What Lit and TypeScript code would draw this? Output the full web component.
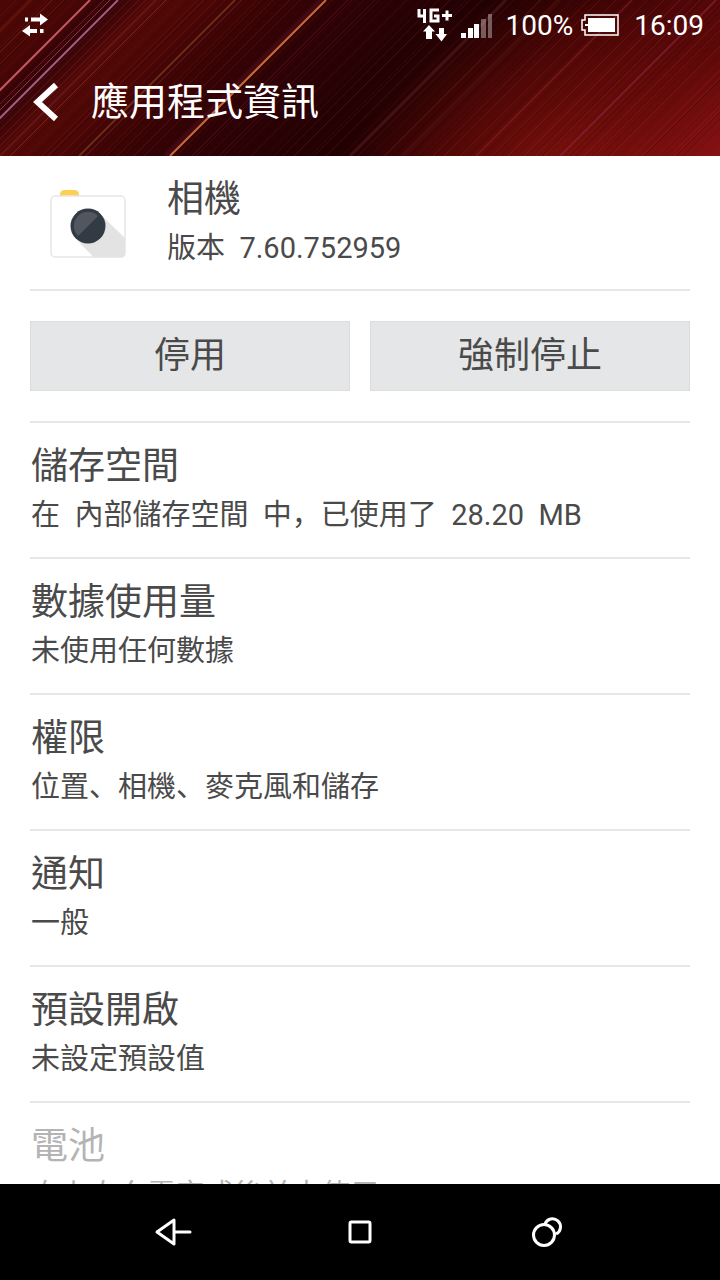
import { LitElement, html, svg, css } from "lit";
import { customElement, property } from "lit/decorators.js";

const FONT = css`Roboto, "Noto Sans CJK TC", sans-serif`;

/* Each streak: [x where it meets the top edge, width, colour, opacity] */
const STREAKS: [number, number, string, number][] = [
  [30, 2, "#7a1a14", 0.5], [52, 1, "#9a3030", 0.5], [90, 2, "#d0606c", 0.9],
  [104, 1, "#8a2a38", 0.6], [110, 1, "#a04a56", 0.8], [118, 2, "#b0648c", 0.9],
  [130, 1, "#7a2030", 0.5], [146, 1, "#8a2430", 0.5], [156, 2, "#702028", 0.6],
  [166, 1, "#8a2c34", 0.6], [204, 1, "#802028", 0.5], [216, 1, "#7a1c24", 0.5],
  [235, 2, "#7a3c22", 0.7], [242, 1, "#5a2018", 0.6], [262, 1, "#5a1418", 0.5],
  [290, 1, "#64181c", 0.5], [322, 6, "#501020", 0.5], [326, 2, "#d07038", 0.95],
  [352, 1, "#54141a", 0.5], [380, 1, "#4c1016", 0.5], [430, 1, "#481016", 0.5],
  [470, 1, "#4a1418", 0.5], [506, 3, "#5a2224", 0.5], [540, 1, "#5a2020", 0.5],
  [560, 4, "#4a1618", 0.35], [600, 1, "#6a181c", 0.5], [632, 2, "#84202c", 0.5],
  [680, 2, "#8a2028", 0.3], [700, 1, "#8a2430", 0.5], [716, 2, "#8c2840", 0.6],
  [740, 1, "#98282c", 0.4], [790, 2, "#a02424", 0.3], [830, 1, "#a82828", 0.3],
];

const GRAIN = Array.from({ length: 170 }, (_, i) => ({
  x: i * 5 + ((i * 37) % 5),
  light: (i * 53) % 3 === 0,
  alpha: 0.06 + ((i * 29) % 7) * 0.025,
}));

@customElement("wallpaper-art")
class WallpaperArt extends LitElement {
  static styles = css`
    :host { display: block; }
    svg { display: block; width: 100%; height: 100%; }
  `;
  render() {
    return html`<svg viewBox="0 0 720 156" preserveAspectRatio="none" aria-hidden="true">
      <defs>
        <linearGradient id="base" gradientUnits="userSpaceOnUse" x1="0" y1="0" x2="438" y2="438">
          <stop offset="0" stop-color="#4c0805"></stop>
          <stop offset="0.09" stop-color="#480706"></stop>
          <stop offset="0.13" stop-color="#340408"></stop>
          <stop offset="0.18" stop-color="#540a06"></stop>
          <stop offset="0.25" stop-color="#480605"></stop>
          <stop offset="0.33" stop-color="#360305"></stop>
          <stop offset="0.42" stop-color="#2c0206"></stop>
          <stop offset="0.56" stop-color="#220103"></stop>
          <stop offset="0.63" stop-color="#300203"></stop>
          <stop offset="0.72" stop-color="#460505"></stop>
          <stop offset="0.82" stop-color="#540707"></stop>
          <stop offset="0.9" stop-color="#640a0a"></stop>
          <stop offset="1" stop-color="#841014"></stop>
        </linearGradient>
        <radialGradient id="glow" gradientUnits="userSpaceOnUse" cx="560" cy="210" r="220">
          <stop offset="0" stop-color="#a01a10" stop-opacity="0.6"></stop>
          <stop offset="0.5" stop-color="#a01a10" stop-opacity="0.24"></stop>
          <stop offset="1" stop-color="#a01a10" stop-opacity="0"></stop>
        </radialGradient>
      </defs>
      <rect width="720" height="156" fill="url(#base)"></rect>
      <rect width="720" height="156" fill="url(#glow)"></rect>
      ${GRAIN.map((g) => svg`<line x1=${g.x} y1="0" x2=${g.x - 156} y2="156" stroke=${g.light ? "#c04040" : "#100000"} stroke-opacity=${g.alpha} stroke-width="1"></line>`)}
      ${STREAKS.map(([x, w, c, o]) => svg`<line x1=${x} y1="0" x2=${x - 156} y2="156" stroke=${c} stroke-opacity=${o} stroke-width=${w}></line>`)}
    </svg>`;
  }
}

@customElement("status-bar")
class StatusBar extends LitElement {
  static styles = css`
    :host {
      display: flex; align-items: center; height: 48px; padding: 0 16px 0 20px;
      color: #fff; font: 400 28px/32px ${FONT};
    }
    svg { display: block; }
    .spacer { flex: 1; }
    .text { padding-top: 4px; }
    .net { margin-right: 8px; }
    .signal { margin-right: 13px; }
    .battery { margin: 2px 15px 0 8px; }
  `;
  render() {
    return html`
      <svg width="30" height="30" viewBox="0 0 30 30" fill="#fff" role="img" aria-label="數據連線">
        <path d="M5 8.500h3v4H5zM11 8.500h9V4.500l8 6-8 6v-4h-9zM20 20h3.500v4H20zM17 20v4h-7v3.500l-8-5.500 8-6v4z"></path>
      </svg>
      <span class="spacer"></span>
      <svg class="net" width="36" height="36" viewBox="0 0 36 36" role="img" aria-label="4G+">
        <path d="M2 3v7h7M7.500 3v14M22 4h-8v11h7V10H17M25 9.500h10M30 4.500v10" fill="none" stroke="#fff" stroke-width="3"></path>
        <path d="M12 19l6 6.500h-3V33H9v-7.500H6zM22 22h5v6h3l-5.500 7.500-6-7.500h3.500z" fill="#fff"></path>
      </svg>
      <svg class="signal" width="32" height="28" viewBox="0 0 32 28" fill="#fff" role="img" aria-label="訊號">
        <path d="M0 23h5v5H0zM7 18h5v10H7zM13 14h5v14h-5z"></path>
        <path d="M20 9h5v19h-5zM27 4h4v24h-4z" opacity="0.35"></path>
      </svg>
      <span class="text">100%</span>
      <svg class="battery" width="38" height="22" viewBox="0 0 38 22" role="img" aria-label="電池">
        <path d="M4 1h33v20H4v-5H1V6h3z" fill="none" stroke="#fff" stroke-width="1.500"></path>
        <path d="M7 4h27v14H7v-6H4v-2h3z" fill="#fff"></path>
      </svg>
      <time class="text">16:09</time>
    `;
  }
}

@customElement("info-row")
class InfoRow extends LitElement {
  @property() heading = "";
  @property() summary = "";
  @property({ type: Boolean, reflect: true }) disabled = false;
  static styles = css`
    :host { display: block; padding: 20px 1px 18px; color: #4a4a4a; }
    :host([disabled]) { color: #b4b4b4; }
    h2, p { margin: 0; line-height: 48px; font-family: ${FONT}; }
    h2 { font-size: 37px; font-weight: 400; }
    p { font-size: 29px; font-weight: 400; white-space: pre-wrap; }
    .mark { font-family: "Noto Sans CJK SC", sans-serif; line-height: 1; }
  `;
  /* Commas sit on the baseline, so they come from a face that draws them there. */
  private marks(text: string) {
    return text.split(/([、，])/).map((part) => (/^[、，]$/.test(part) ? html`<span class="mark" lang="zh-Hans">${part}</span>` : part));
  }
  render() {
    return html`<h2>${this.heading}</h2><p>${this.marks(this.summary)}</p>`;
  }
}

const ROWS = [
  { heading: "儲存空間", summary: "在  內部儲存空間  中，已使用了  28.20  MB" },
  { heading: "數據使用量", summary: "未使用任何數據" },
  { heading: "權限", summary: "位置、相機、麥克風和儲存" },
  { heading: "通知", summary: "一般" },
  { heading: "預設開啟", summary: "未設定預設值" },
  { heading: "電池", summary: "自上次充電完成後並未使用", disabled: true },
];

@customElement("app-root")
class AppRoot extends LitElement {
  static styles = css`
    :host {
      display: flex; flex-direction: column; height: 100vh; overflow: hidden;
      background: #fff; color: #4a4a4a; font-family: ${FONT};
    }
    * { box-sizing: border-box; }
    svg { display: block; }
    header { position: relative; flex: none; color: #fff; }
    .art { position: absolute; inset: 0; }
    .front { position: relative; }
    .bar { display: flex; align-items: center; height: 108px; padding-left: 31px; gap: 30px; }
    h1 { margin: 0; font-size: 38px; line-height: 48px; font-weight: 400; }
    button { border: 0; margin: 0; padding: 0; background: none; color: inherit; font: inherit; }
    main { flex: 1; min-height: 0; overflow: hidden; padding: 0 30px; }
    .app { display: flex; align-items: center; gap: 20px; padding-left: 20px; border-bottom: 2px solid #e6e7e8; }
    .app svg { margin-top: 4px; }
    .app info-row { padding: 20px 0 17px 20px; }
    .actions { display: grid; grid-template-columns: 1fr 1fr; gap: 20px; padding: 30px 0; }
    .actions button {
      height: 70px; background: #e5e6e8; border: 1px solid #dbdddd;
      font-size: 36px; font-weight: 400; line-height: 48px;
    }
    ul { list-style: none; margin: 0; padding: 0; }
    li { border-top: 2px solid #e6e7e8; }
    nav { flex: none; display: flex; justify-content: center; gap: 147px; height: 96px; background: #000; color: #fff; }
    nav button { width: 40px; display: grid; place-items: center; }
  `;
  render() {
    return html`
      <header>
        <wallpaper-art class="art"></wallpaper-art>
        <div class="front">
          <status-bar></status-bar>
          <div class="bar">
            <button aria-label="返回">
              <svg width="30" height="40" viewBox="0 0 30 40" fill="none" stroke="#fff" stroke-width="6">
                <path d="M25 3L6.500 20L25 37"></path>
              </svg>
            </button>
            <h1>應用程式資訊</h1>
          </div>
        </div>
      </header>
      <main>
        <section class="app">
          <svg width="77" height="70" viewBox="0 0 77 70" aria-hidden="true">
            <path d="M10 7V5q0-5 5-5h9q5 0 5 5v2z" fill="#fcd050"></path>
            <rect x="1" y="6" width="74" height="61" rx="4" fill="#fff" stroke="#e6e6e6" stroke-width="1.500"></rect>
            <path d="M50 24L75 48V64q0 3.500-4 3.500H44L25 48z" fill="#e3e3e3"></path>
            <circle cx="38" cy="36" r="17.500" fill="#323a43"></circle>
            <path d="M28 46A14 14 0 0 1 48 26z" fill="#51565f"></path>
          </svg>
          <info-row heading="相機" summary="版本  7.60.752959"></info-row>
        </section>
        <section class="actions">
          <button>停用</button>
          <button>強制停止</button>
        </section>
        <ul>
          ${ROWS.map((r) => html`<li><info-row .heading=${r.heading} .summary=${r.summary} ?disabled=${!!r.disabled}></info-row></li>`)}
        </ul>
      </main>
      <nav aria-label="系統導覽">
        <button aria-label="上一頁">
          <svg width="40" height="32" viewBox="0 0 40 32" fill="none" stroke="#fff" stroke-width="3" stroke-linejoin="round" stroke-linecap="round">
            <path d="M21 4V28L4 16zM21 16H37"></path>
          </svg>
        </button>
        <button aria-label="首頁">
          <svg width="24" height="24" viewBox="0 0 24 24" fill="none" stroke="#fff" stroke-width="3">
            <rect x="2" y="2" width="20" height="20" rx="1.500"></rect>
          </svg>
        </button>
        <button aria-label="最近使用">
          <svg width="32" height="32" viewBox="0 0 32 32" fill="none" stroke="#fff" stroke-width="3">
            <circle cx="13" cy="19" r="10.500"></circle>
            <path d="M14 8A8 8 0 1 1 25 18"></path>
          </svg>
        </button>
      </nav>
    `;
  }
}
